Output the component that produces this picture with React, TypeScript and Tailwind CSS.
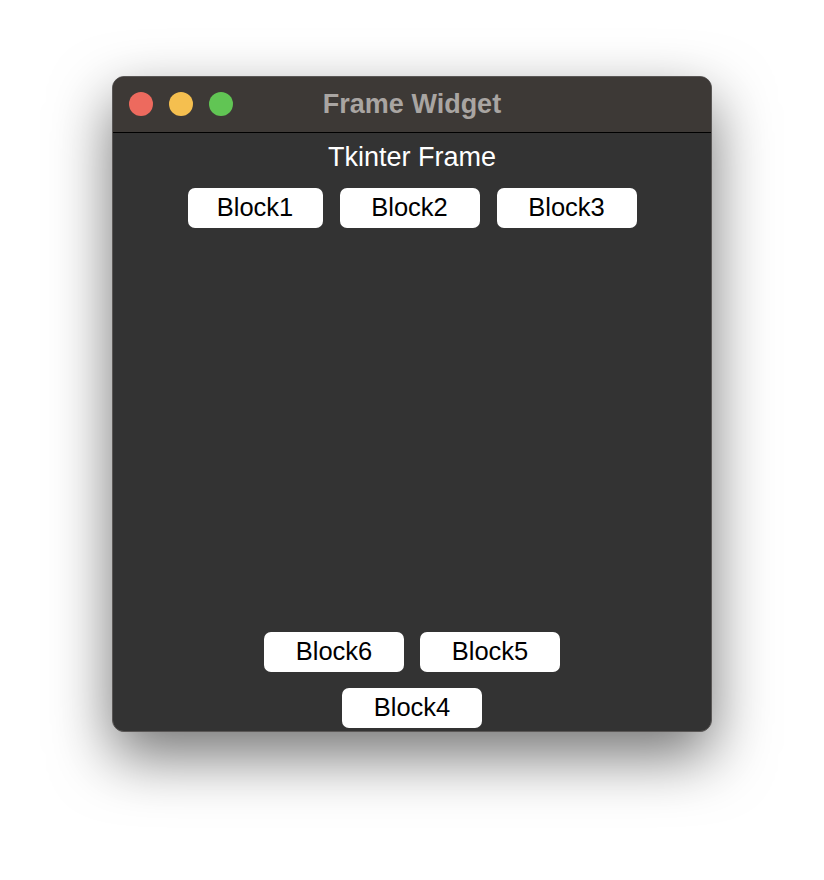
import React from "react";

function Block({ label, width }: { label: string; width: string }) {
  return (
    <div
      className={`${width} h-[40px] bg-white rounded-[7px] flex items-center justify-center text-black text-[25.5px] leading-none`}
    >
      {label}
    </div>
  );
}

export default function App() {
  return (
    <div
      className="w-[824px] h-[880px] bg-white pt-[76px] pl-[112px]"
      style={{ fontFamily: '"Liberation Sans", Arial, sans-serif' }}
    >
      <div className="w-[600px] h-[656px] rounded-[12px] border border-[#5a5756] bg-[#333333] flex flex-col overflow-hidden shadow-[0_24px_60px_rgba(0,0,0,0.55)]">
        {/* title bar */}
        <div className="relative h-[56px] bg-[#3d3936] border-b border-black flex items-center justify-center">
          <div className="absolute left-[16px] top-[15px] flex gap-[16px]">
            <span className="w-[24px] h-[24px] rounded-full bg-[#ed6a5e]" />
            <span className="w-[24px] h-[24px] rounded-full bg-[#f5bf4f]" />
            <span className="w-[24px] h-[24px] rounded-full bg-[#61c554]" />
          </div>
          <span className="text-[#a9a5a2] font-bold text-[27px] leading-none">Frame Widget</span>
        </div>

        {/* body */}
        <div className="flex-1 flex flex-col justify-between pb-[3px]">
          <div className="flex flex-col items-center pt-[10px]">
            <div className="text-white text-[27px] leading-[28px]">Tkinter Frame</div>
            <div className="flex gap-[17px] mt-[17px]">
              <Block label="Block1" width="w-[135px]" />
              <Block label="Block2" width="w-[140px]" />
              <Block label="Block3" width="w-[140px]" />
            </div>
          </div>
          <div className="flex flex-col items-center gap-[16px]">
            <div className="flex gap-[16px]">
              <Block label="Block6" width="w-[140px]" />
              <Block label="Block5" width="w-[140px]" />
            </div>
            <Block label="Block4" width="w-[140px]" />
          </div>
        </div>
      </div>
    </div>
  );
}
